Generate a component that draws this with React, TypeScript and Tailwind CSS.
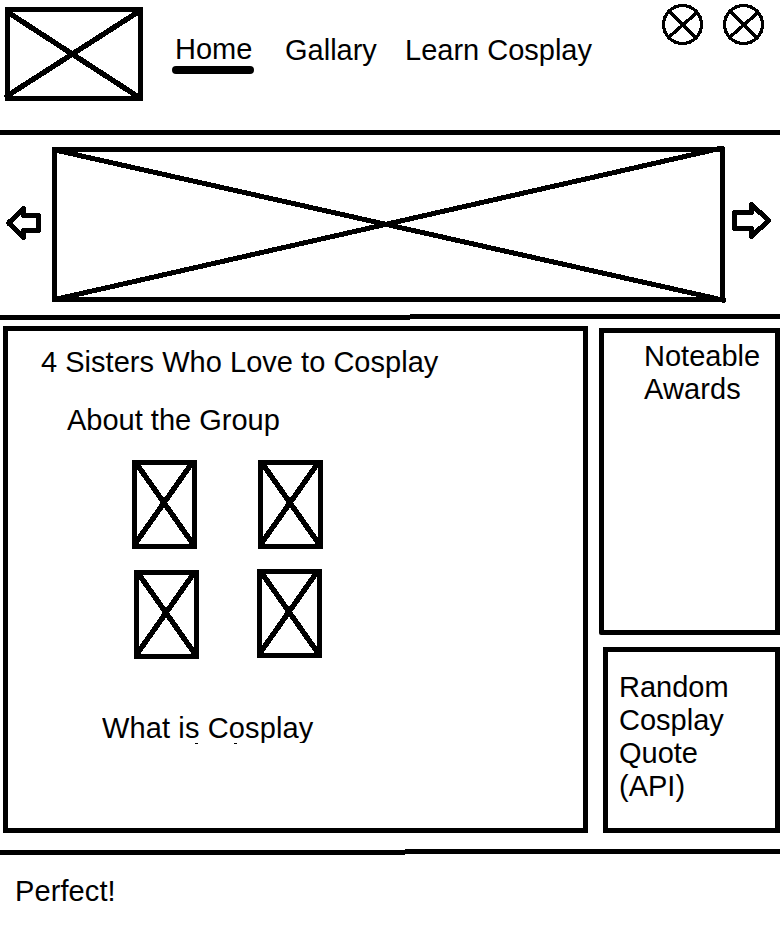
import type { ReactNode } from "react";

function Avatar() {
  return (
    <svg className="h-[41px] w-[41px]" viewBox="0 0 41 41" fill="none" stroke="black" shapeRendering="crispEdges">
      <circle cx="20.5" cy="20.5" r="19" strokeWidth="3.2" />
      <path d="M7 7L34 34" strokeWidth="4.2" />
      <path d="M35 8.5L7 33" strokeWidth="3.4" />
    </svg>
  );
}

function Portrait({ className }: { className: string }) {
  return (
    <svg
      className={`h-[89px] w-[65px] shrink-0 ${className}`}
      viewBox="0 0 65 89"
      fill="none"
      stroke="black"
      strokeWidth="5"
      shapeRendering="crispEdges"
    >
      <rect x="2.5" y="2.5" width="60" height="84" />
      <path d="M4 3L61 84M3 84L60 3" strokeWidth="5.4" />
    </svg>
  );
}

function Divider({ split }: { split: string }) {
  return (
    <div className="flex h-1.5 w-[780px] items-start">
      <div className={`mt-px h-[5px] bg-black ${split}`} />
      <div className="h-[5px] flex-1 bg-black" />
    </div>
  );
}

function Line({ className = "", children }: { className?: string; children: ReactNode }) {
  return <p className={`whitespace-nowrap ${className}`}>{children}</p>;
}

export default function App() {
  return (
    <div className="h-[936px] w-[782px] overflow-hidden bg-white font-['Liberation_Sans',Arial,sans-serif] text-[29px] leading-[33px] text-black">
      <header className="flex h-[130px] items-start">
        <svg
          className="mt-[7px] ml-[4px] h-[95px] w-[139px] shrink-0"
          viewBox="-1 0 139 95"
          fill="none"
          stroke="black"
          strokeWidth="5"
          shapeRendering="crispEdges"
        >
          <rect x="2.5" y="2.5" width="133" height="89" />
          <path d="M4 6L135 91M2 89L133 5" strokeWidth="5.4" strokeLinecap="round" />
        </svg>
        <nav className="flex">
          <div className="mt-[33px] ml-[29px] w-[82px]">
            <a className="ml-[3px] block">Home</a>
            <div className="h-2 rounded-full bg-black" />
          </div>
          <a className="mt-[34px] ml-[31px] w-[120px]">Gallary</a>
          <a className="mt-[34px] whitespace-nowrap">Learn Cosplay</a>
        </nav>
        <div className="mt-1 mr-[18px] ml-auto flex gap-5">
          <Avatar />
          <Avatar />
        </div>
      </header>
      <div className="h-[5px] w-[780px] bg-black" />

      <section className="flex h-[179px] items-start">
        <svg
          className="mt-[70px] ml-[5px] h-10 w-[38px] shrink-0"
          viewBox="5 205 38 40"
          fill="none"
          stroke="black"
          strokeWidth="5"
          strokeLinejoin="round"
          shapeRendering="crispEdges"
        >
          <path d="M8.5 223L23.5 208.5V215.5H38.5V230.5H23.5V237.5Z" />
        </svg>
        <svg
          className="mt-[10px] ml-[9px] h-[160px] w-[675px] shrink-0"
          viewBox="52 145 675 160"
          fill="none"
          stroke="black"
          strokeWidth="5"
          shapeRendering="crispEdges"
        >
          <rect x="54.5" y="149.5" width="668" height="150" />
          <path d="M55 150L724 300.3M57 299L722 148" strokeLinecap="round" />
        </svg>
        <svg
          className="mt-[65px] ml-[3px] h-10 w-[42px] shrink-0"
          viewBox="730 200 42 40"
          fill="none"
          stroke="black"
          strokeWidth="5"
          strokeLinejoin="round"
          shapeRendering="crispEdges"
        >
          <path d="M734.5 212.5H751.5V204.5L768.5 220.5L751.5 236.5V228.5H734.5Z" />
        </svg>
      </section>
      <Divider split="w-[410px]" />

      <div className="flex h-[529px] items-start">
        <main className="mt-1.5 ml-[3px] h-[507px] w-[585px] border-5 border-black pt-[15px]">
          <Line className="ml-[33px] tracking-[0.03px]">4 Sisters Who Love to Cosplay</Line>
          <Line className="mt-[25px] ml-[59px]">About the Group</Line>
          <div className="mt-[23px] ml-[124px] flex gap-[61px]">
            <Portrait className="" />
            <Portrait className="" />
          </div>
          <div className="mt-5 ml-[126px] flex gap-[58px]">
            <Portrait className="mt-px" />
            <Portrait className="" />
          </div>
          <div className="mt-[53px] ml-[94px] h-8 overflow-hidden">
            <Line className="h-[31px] overflow-hidden tracking-[0.12px]">What is Cosplay</Line>
            <div className="ml-[93px] flex h-px gap-9">
              <div className="w-[3px] bg-black" />
              <div className="w-[3px] bg-black" />
            </div>
          </div>
        </main>
        <aside className="ml-[11px]">
          <section className="mt-2 h-[307px] w-[181px] rounded-bl-xs border-5 border-black pt-[7px] pl-[40px]">
            <Line>Noteable</Line>
            <Line className="tracking-[0.1px]">Awards</Line>
          </section>
          <section className="mt-3 ml-1 h-[186px] w-[177px] border-5 border-black pt-[19px] pl-[11px]">
            <Line>Random</Line>
            <Line>Cosplay</Line>
            <Line>Quote</Line>
            <Line>(API)</Line>
          </section>
        </aside>
      </div>
      <Divider split="w-[405px]" />

      <footer className="pt-5 pl-[15px]">
        <Line className="tracking-[0.1px]">Perfect!</Line>
      </footer>
    </div>
  );
}
